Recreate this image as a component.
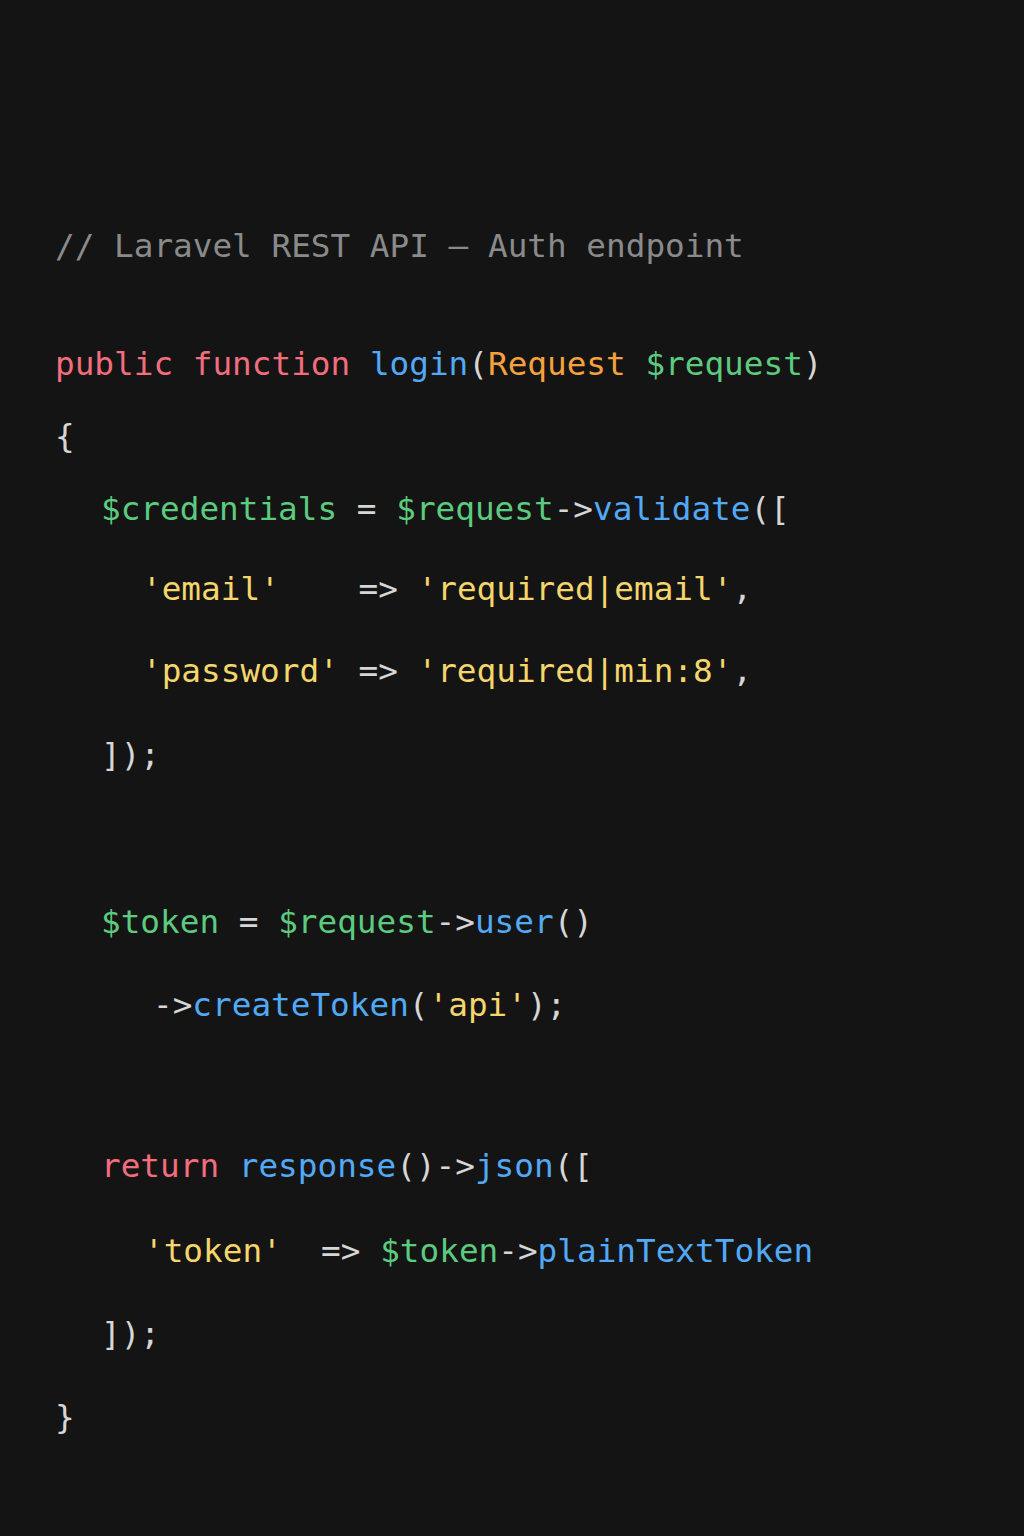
type Tok = { t: string; c: string }

const kw = "text-[#f26d7d]"
const fn = "text-[#52a9f5]"
const ty = "text-[#f5a23e]"
const vr = "text-[#5ccb7f]"
const st = "text-[#f4d66c]"
const pu = "text-[#d6d6d6]"
const cm = "text-[#8a8a8a]"

type LineProps = { cls: string; toks: Tok[] }

const Line = ({ cls, toks }: LineProps) => (
  <div className={`h-[60px] leading-[60px] whitespace-pre ${cls}`}>
    {toks.map((tk, i) => (
      <span key={i} className={tk.c}>
        {tk.t}
      </span>
    ))}
  </div>
)

export default function App() {
  return (
    <div className="min-h-[1536px] w-full bg-[#141414] pl-[55px] pt-[216px] font-['DejaVu_Sans_Mono',monospace] text-[32.7px]">
      <Line cls="" toks={[{ t: "// Laravel REST API – Auth endpoint", c: cm }]} />
      <Line
        cls="mt-[58px]"
        toks={[
          { t: "public function ", c: kw },
          { t: "login", c: fn },
          { t: "(", c: pu },
          { t: "Request ", c: ty },
          { t: "$request", c: vr },
          { t: ")", c: pu },
        ]}
      />
      <Line cls="mt-[12px]" toks={[{ t: "{", c: pu }]} />
      <Line
        cls="mt-[13px] pl-[46px]"
        toks={[
          { t: "$credentials", c: vr },
          { t: " = ", c: pu },
          { t: "$request", c: vr },
          { t: "->", c: pu },
          { t: "validate", c: fn },
          { t: "([", c: pu },
        ]}
      />
      <Line
        cls="mt-[20px] pl-[87px]"
        toks={[
          { t: "'email'", c: st },
          { t: "    => ", c: pu },
          { t: "'required|email'", c: st },
          { t: ",", c: pu },
        ]}
      />
      <Line
        cls="mt-[22px] pl-[87px]"
        toks={[
          { t: "'password'", c: st },
          { t: " => ", c: pu },
          { t: "'required|min:8'", c: st },
          { t: ",", c: pu },
        ]}
      />
      <Line cls="mt-[24px] pl-[46px]" toks={[{ t: "]);", c: pu }]} />
      <Line
        cls="mt-[107px] pl-[46px]"
        toks={[
          { t: "$token", c: vr },
          { t: " = ", c: pu },
          { t: "$request", c: vr },
          { t: "->", c: pu },
          { t: "user", c: fn },
          { t: "()", c: pu },
        ]}
      />
      <Line
        cls="mt-[23px] pl-[98px]"
        toks={[
          { t: "->", c: pu },
          { t: "createToken", c: fn },
          { t: "(", c: pu },
          { t: "'api'", c: st },
          { t: ");", c: pu },
        ]}
      />
      <Line
        cls="mt-[101px] pl-[46px]"
        toks={[
          { t: "return ", c: kw },
          { t: "response", c: fn },
          { t: "()->", c: pu },
          { t: "json", c: fn },
          { t: "([", c: pu },
        ]}
      />
      <Line
        cls="mt-[25px] pl-[89px]"
        toks={[
          { t: "'token'", c: st },
          { t: "  => ", c: pu },
          { t: "$token", c: vr },
          { t: "->", c: pu },
          { t: "plainTextToken", c: fn },
        ]}
      />
      <Line cls="mt-[23px] pl-[46px]" toks={[{ t: "]);", c: pu }]} />
      <Line cls="mt-[23px]" toks={[{ t: "}", c: pu }]} />
    </div>
  )
}
